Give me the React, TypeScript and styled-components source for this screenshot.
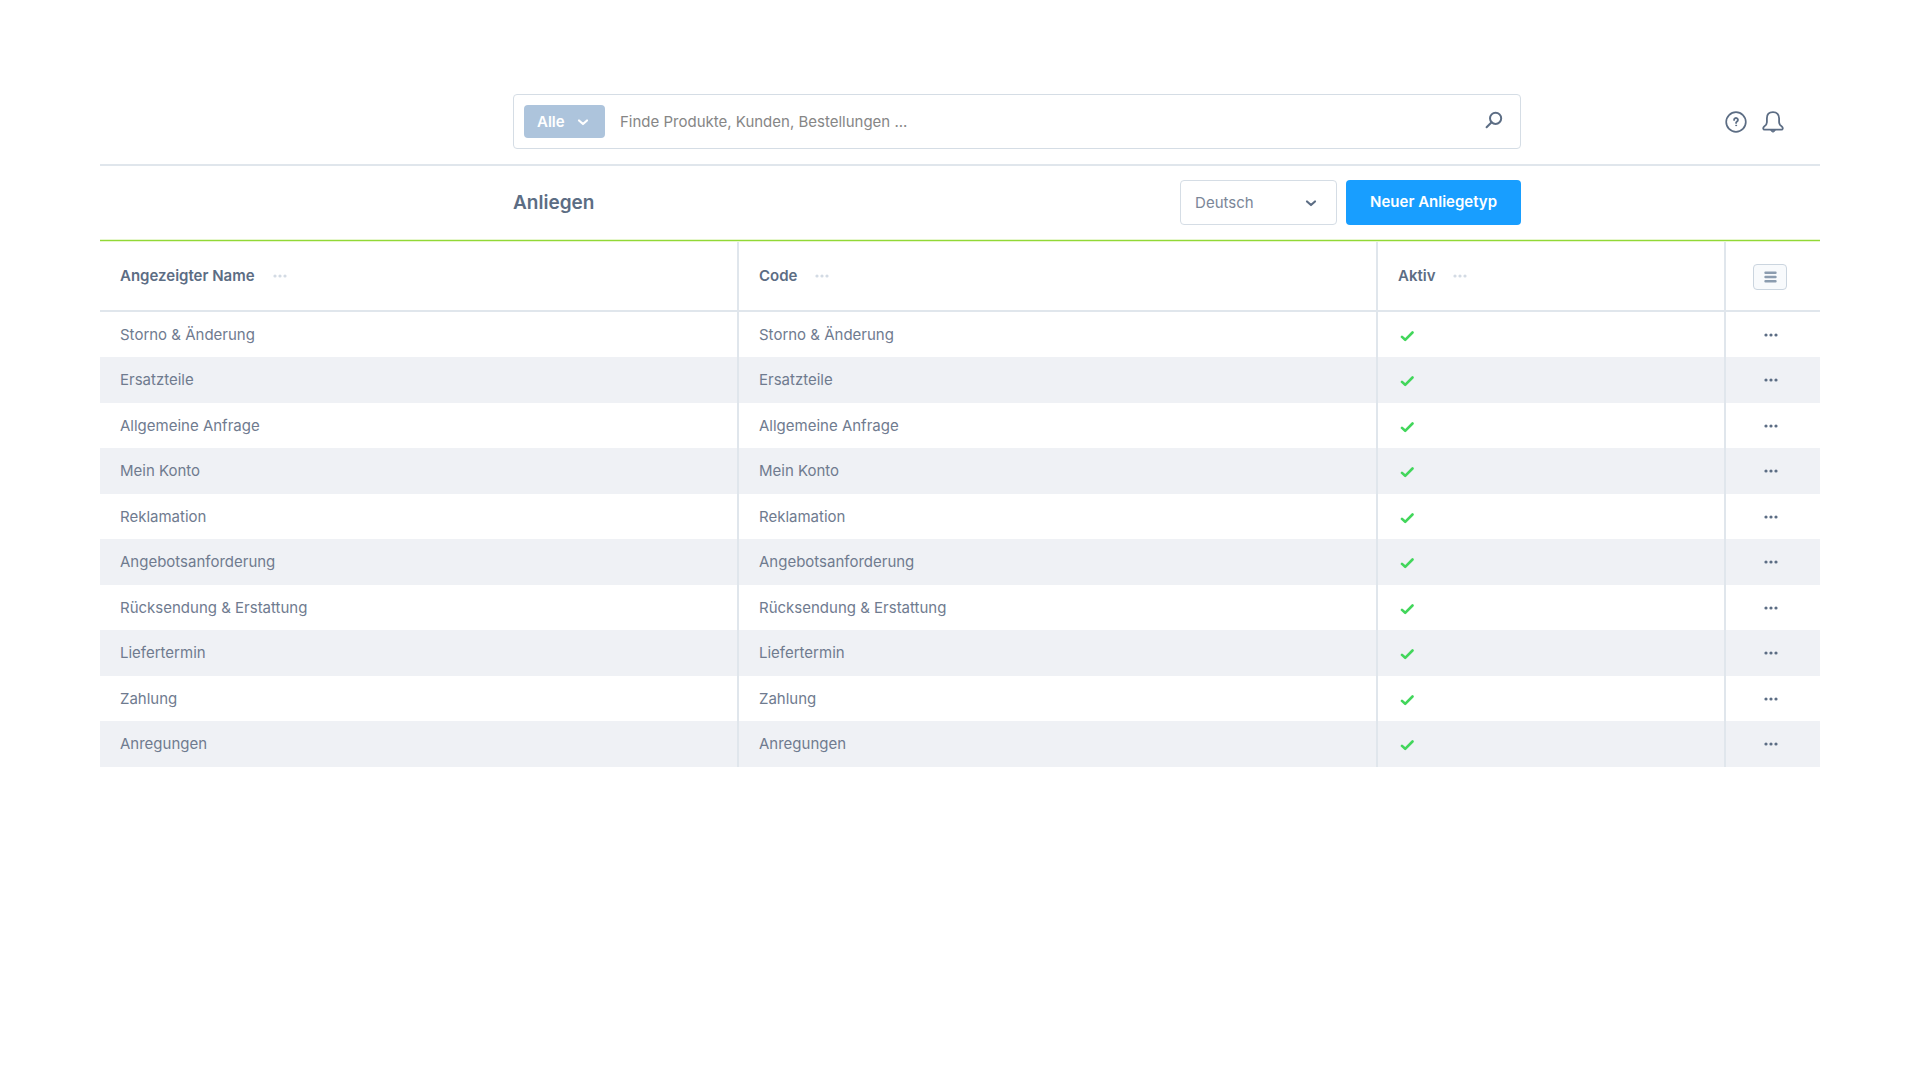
import React from "react";
import styled, { createGlobalStyle } from "styled-components";

const font = `Inter, "Liberation Sans", sans-serif`;
const line = "#e0e6ec";
const ink = "#5c6d84";

const GlobalStyle = createGlobalStyle`
  *, *::before, *::after { box-sizing: border-box; }
  body { margin: 0; background: #fff; color: ${ink}; font: 400 15px/20px ${font}; }
  button, input, select { font: inherit; color: inherit; margin: 0; }
`;

const Page = styled.div`
  padding: 94px 100px;
`;

const Bar = styled.div`
  display: grid;
  grid-template-columns: 413px minmax(0, 1fr) 299px;
  align-items: center;
`;

const TopBar = styled(Bar).attrs({ as: "header" })`
  padding-bottom: 15px;
  border-bottom: 2px solid ${line};
`;

const TitleBar = styled(Bar)`
  padding: 14px 0 15px;
  border-bottom: 1px solid #92d836;
  box-shadow: 0 1px 0 #e6f7cd, inset 0 -1px 0 #e6f7cd;
`;

const SearchBox = styled.form`
  grid-column: 2;
  display: flex;
  align-items: center;
  height: 55px;
  padding: 0 17px 0 10px;
  border: 1px solid #d5dde5;
  border-radius: 4px;
`;

const SelectWrap = styled.div`
  display: grid;
  align-items: center;
  > * { grid-area: 1 / 1; }
  > svg { justify-self: end; pointer-events: none; }
`;

const ScopeWrap = styled(SelectWrap)`
  color: #fff;
  > svg { margin-right: 16px; }
`;

const LanguageWrap = styled(SelectWrap)`
  > svg { margin-right: 20px; }
`;

const Select = styled.select`
  appearance: none;
  outline: none;
  border-radius: 4px;
  cursor: pointer;
`;

const ScopeSelect = styled(Select)`
  width: 81px;
  height: 33px;
  padding: 0 13px;
  border: 0;
  background: #adc4dc;
  font-weight: 600;
`;

const LanguageSelect = styled(Select)`
  width: 157px;
  height: 45px;
  padding: 0 14px;
  border: 1px solid #d5dde5;
  background: #fff;
  color: #7b8698;
`;

const SearchInput = styled.input`
  flex: 1;
  min-width: 0;
  height: 40px;
  padding: 0 15px;
  border: 0;
  outline: none;
  background: transparent;
  &::placeholder { color: #868686; opacity: 1; }
`;

const IconButton = styled.button`
  display: flex;
  padding: 0;
  border: 0;
  background: none;
  cursor: pointer;
`;

const SearchButton = styled(IconButton)`
  padding-bottom: 4px;
`;

const HeaderActions = styled.div`
  display: flex;
  justify-content: flex-end;
  gap: 15px;
  padding-right: 36px;
`;

const TitleRow = styled.div`
  grid-column: 2;
  display: flex;
  align-items: center;
  gap: 9px;
`;

const Title = styled.h1`
  flex: 1;
  margin: 0;
  font-size: 19px;
  line-height: 28px;
  font-weight: 600;
`;

const PrimaryButton = styled.button`
  height: 45px;
  padding: 0 24px 2px;
  border: 0;
  border-radius: 4px;
  background: #189eff;
  color: #fff;
  font-weight: 600;
  cursor: pointer;
`;

const Table = styled.table`
  width: 100%;
  margin-top: 1px;
  table-layout: fixed;
  border-collapse: separate;
  border-spacing: 0;
`;

const Col = styled.col<{ $width?: number }>`
  width: ${(p) => (p.$width ? `${p.$width}px` : "auto")};
`;

const HeadCell = styled.th`
  height: 70px;
  padding: 0 20px;
  border-bottom: 2px solid ${line};
  border-right: 2px solid ${line};
  text-align: left;
  font-weight: 600;
  &:last-child { padding: 2px 27px 0; border-right: 0; }
`;

const HeadContent = styled.div`
  display: flex;
  align-items: center;
  gap: 18px;
`;

const Row = styled.tr`
  height: 45px;
  &:nth-child(even) { height: 46px; background: #eff1f5; }
`;

const Cell = styled.td`
  padding: 0 20px;
  border-right: 2px solid ${line};
  color: #6f7b8f;
  &:last-child { border-right: 0; }
`;

const StateCell = styled(Cell)`
  padding: 2px 22px 0;
  svg { display: block; }
`;

const ActionCell = styled(Cell)`
  padding: 0 38px;
`;

const ListButton = styled.button`
  display: flex;
  align-items: center;
  justify-content: center;
  width: 34px;
  height: 26px;
  padding: 0;
  border: 1px solid #cbd5df;
  border-radius: 4px;
  background: #f8fafc;
  cursor: pointer;
`;

const Chevron = () => (
  <svg width="12" height="8" viewBox="0 0 12 8" fill="none" stroke="currentColor" strokeWidth="2.2" strokeLinecap="round" strokeLinejoin="round" aria-hidden="true">
    <path d="M2 2.5l4 3.5 4-3.5" />
  </svg>
);

const Dots = ({ color }: { color: string }) => (
  <svg width="14" height="4" viewBox="0 0 14 4" fill={color} aria-hidden="true">
    <circle cx="2" cy="2" r="1.6" />
    <circle cx="7" cy="2" r="1.6" />
    <circle cx="12" cy="2" r="1.6" />
  </svg>
);

const SearchIcon = () => (
  <svg width="18" height="18" viewBox="0 0 18 18" fill="none" stroke="currentColor" strokeWidth="2" strokeLinecap="round" aria-hidden="true">
    <circle cx="10.6" cy="7.3" r="5.6" />
    <path d="M6.6 11.3L1.6 16.3" />
  </svg>
);

const HelpIcon = () => (
  <svg width="22" height="22" viewBox="0 0 22 22" fill="none" stroke="currentColor" strokeLinecap="round" strokeLinejoin="round" aria-hidden="true">
    <circle cx="11" cy="11" r="9.8" strokeWidth="1.7" />
    <path d="M9.1 8.9a1.9 1.9 0 1 1 2.9 1.6c-.7.4-.9.7-.9 1.400" strokeWidth="1.9" />
    <circle cx="11.100" cy="14.400" r=".5" strokeWidth="1" />
  </svg>
);

const BellIcon = () => (
  <svg width="22" height="22" viewBox="0 0 22 22" fill="none" stroke="currentColor" strokeWidth="1.8" strokeLinecap="round" strokeLinejoin="round" aria-hidden="true">
    <path d="M11 1.200C7 1.200 4.900 3.700 4.900 7.300v3.900c0 2-.9 3.100-2.700 4.300-1.500 1.200-1.200 3.200.5 3.200h16.600c1.700 0 2-2 .5-3.200-1.800-1.200-2.700-2.300-2.700-4.300V7.300c0-3.600-2.100-6.100-6.100-6.100z" />
    <path d="M8.900 19.300c.3 1.100 1.100 1.700 2.100 1.700s1.800-.6 2.100-1.700z" fill="currentColor" strokeWidth="1" />
  </svg>
);

const ListIcon = () => (
  <svg width="14" height="12" viewBox="0 0 14 12" fill="none" stroke="#8b9caf" strokeWidth="2.4" strokeLinecap="round" aria-hidden="true">
    <path d="M2.500 1.700h10M2.500 6h10M2.500 10.300h10" />
  </svg>
);

const CheckIcon = () => (
  <svg width="14" height="12" viewBox="0 0 14 12" fill="none" stroke="#42d65b" strokeWidth="2.6" strokeLinecap="round" strokeLinejoin="round" role="img" aria-label="Aktiv">
    <path d="M2 6.900L5.200 9.800 12.500 2.500" />
  </svg>
);

const types = [
  "Storno & Änderung",
  "Ersatzteile",
  "Allgemeine Anfrage",
  "Mein Konto",
  "Reklamation",
  "Angebotsanforderung",
  "Rücksendung & Erstattung",
  "Liefertermin",
  "Zahlung",
  "Anregungen",
];

const columns = ["Angezeigter Name", "Code", "Aktiv"];

export default function App() {
  return (
    <Page>
      <GlobalStyle />
      <TopBar>
        <SearchBox role="search" onSubmit={(e) => e.preventDefault()}>
          <ScopeWrap>
            <ScopeSelect aria-label="Suchbereich">
              <option>Alle</option>
            </ScopeSelect>
            <Chevron />
          </ScopeWrap>
          <SearchInput type="text" aria-label="Suche" placeholder="Finde Produkte, Kunden, Bestellungen ..." />
          <SearchButton type="submit" aria-label="Suchen">
            <SearchIcon />
          </SearchButton>
        </SearchBox>
        <HeaderActions>
          <IconButton type="button" aria-label="Hilfe">
            <HelpIcon />
          </IconButton>
          <IconButton type="button" aria-label="Benachrichtigungen">
            <BellIcon />
          </IconButton>
        </HeaderActions>
      </TopBar>
      <TitleBar>
        <TitleRow>
          <Title>Anliegen</Title>
          <LanguageWrap>
            <LanguageSelect aria-label="Sprache">
              <option>Deutsch</option>
            </LanguageSelect>
            <Chevron />
          </LanguageWrap>
          <PrimaryButton type="button">Neuer Anliegetyp</PrimaryButton>
        </TitleRow>
      </TitleBar>
      <Table>
        <colgroup>
          <Col />
          <Col />
          <Col $width={348} />
          <Col $width={94} />
        </colgroup>
        <thead>
          <tr>
            {columns.map((name) => (
              <HeadCell key={name} scope="col">
                <HeadContent>
                  {name}
                  <IconButton type="button" aria-label={`${name}: Spaltenmenü`}>
                    <Dots color="#d3dbe4" />
                  </IconButton>
                </HeadContent>
              </HeadCell>
            ))}
            <HeadCell scope="col">
              <ListButton type="button" aria-label="Listeneinstellungen">
                <ListIcon />
              </ListButton>
            </HeadCell>
          </tr>
        </thead>
        <tbody>
          {types.map((name) => (
            <Row key={name}>
              <Cell>{name}</Cell>
              <Cell>{name}</Cell>
              <StateCell>
                <CheckIcon />
              </StateCell>
              <ActionCell>
                <IconButton type="button" aria-label={`${name}: Aktionen`}>
                  <Dots color={ink} />
                </IconButton>
              </ActionCell>
            </Row>
          ))}
        </tbody>
      </Table>
    </Page>
  );
}
